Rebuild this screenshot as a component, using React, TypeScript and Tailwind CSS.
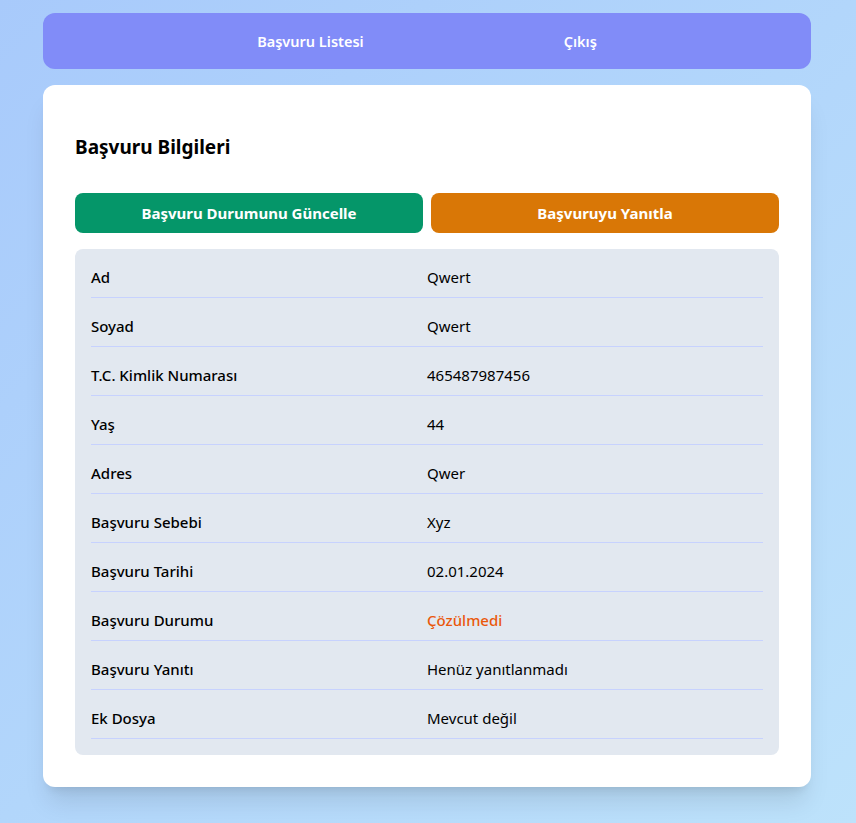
import React from "react";

const rows: { label: string; value: string; highlight?: boolean }[] = [
  { label: "Ad", value: "Qwert" },
  { label: "Soyad", value: "Qwert" },
  { label: "T.C. Kimlik Numarası", value: "465487987456" },
  { label: "Yaş", value: "44" },
  { label: "Adres", value: "Qwer" },
  { label: "Başvuru Sebebi", value: "Xyz" },
  { label: "Başvuru Tarihi", value: "02.01.2024" },
  { label: "Başvuru Durumu", value: "Çözülmedi", highlight: true },
  { label: "Başvuru Yanıtı", value: "Henüz yanıtlanmadı" },
  { label: "Ek Dosya", value: "Mevcut değil" },
];

export default function App() {
  return (
    <div
      className="min-h-[823px] bg-gradient-to-br from-[#a8cafb] via-[#b2d6fb] to-[#bde2fb] pt-[13px] pb-9 pr-[2px] text-black"
      style={{ fontFamily: '"Noto Sans", "Open Sans", sans-serif' }}
    >
      <nav className="max-w-3xl mx-auto bg-[#818cf8] rounded-xl py-4 mb-4">
        <ul className="flex justify-center gap-[200px] text-white text-[14.5px] font-semibold leading-6">
          <li>Başvuru Listesi</li>
          <li>Çıkış</li>
        </ul>
      </nav>

      <div className="max-w-3xl mx-auto bg-white rounded-xl shadow-xl px-8 pt-12 pb-8">
        <h2 className="text-[19px] font-bold leading-7 mb-8">Başvuru Bilgileri</h2>

        <div className="flex gap-2 mb-4">
          <button className="flex-1 h-10 rounded-lg bg-[#059669] text-white text-[15px] font-bold">
            Başvuru Durumunu Güncelle
          </button>
          <button className="flex-1 h-10 rounded-lg bg-[#d97706] text-white text-[15px] font-bold">
            Başvuruyu Yanıtla
          </button>
        </div>

        <div className="bg-[#e2e8f0] rounded-lg px-4 py-2">
          {rows.map((r) => (
            <div key={r.label} className="grid grid-cols-2 py-2 mb-2 border-b border-[#c7d2fe] text-[15px] leading-6">
              <span className="font-medium">{r.label}</span>
              <span className={r.highlight ? "text-[#ea580c] font-medium" : ""}>{r.value}</span>
            </div>
          ))}
        </div>
      </div>
    </div>
  );
}
